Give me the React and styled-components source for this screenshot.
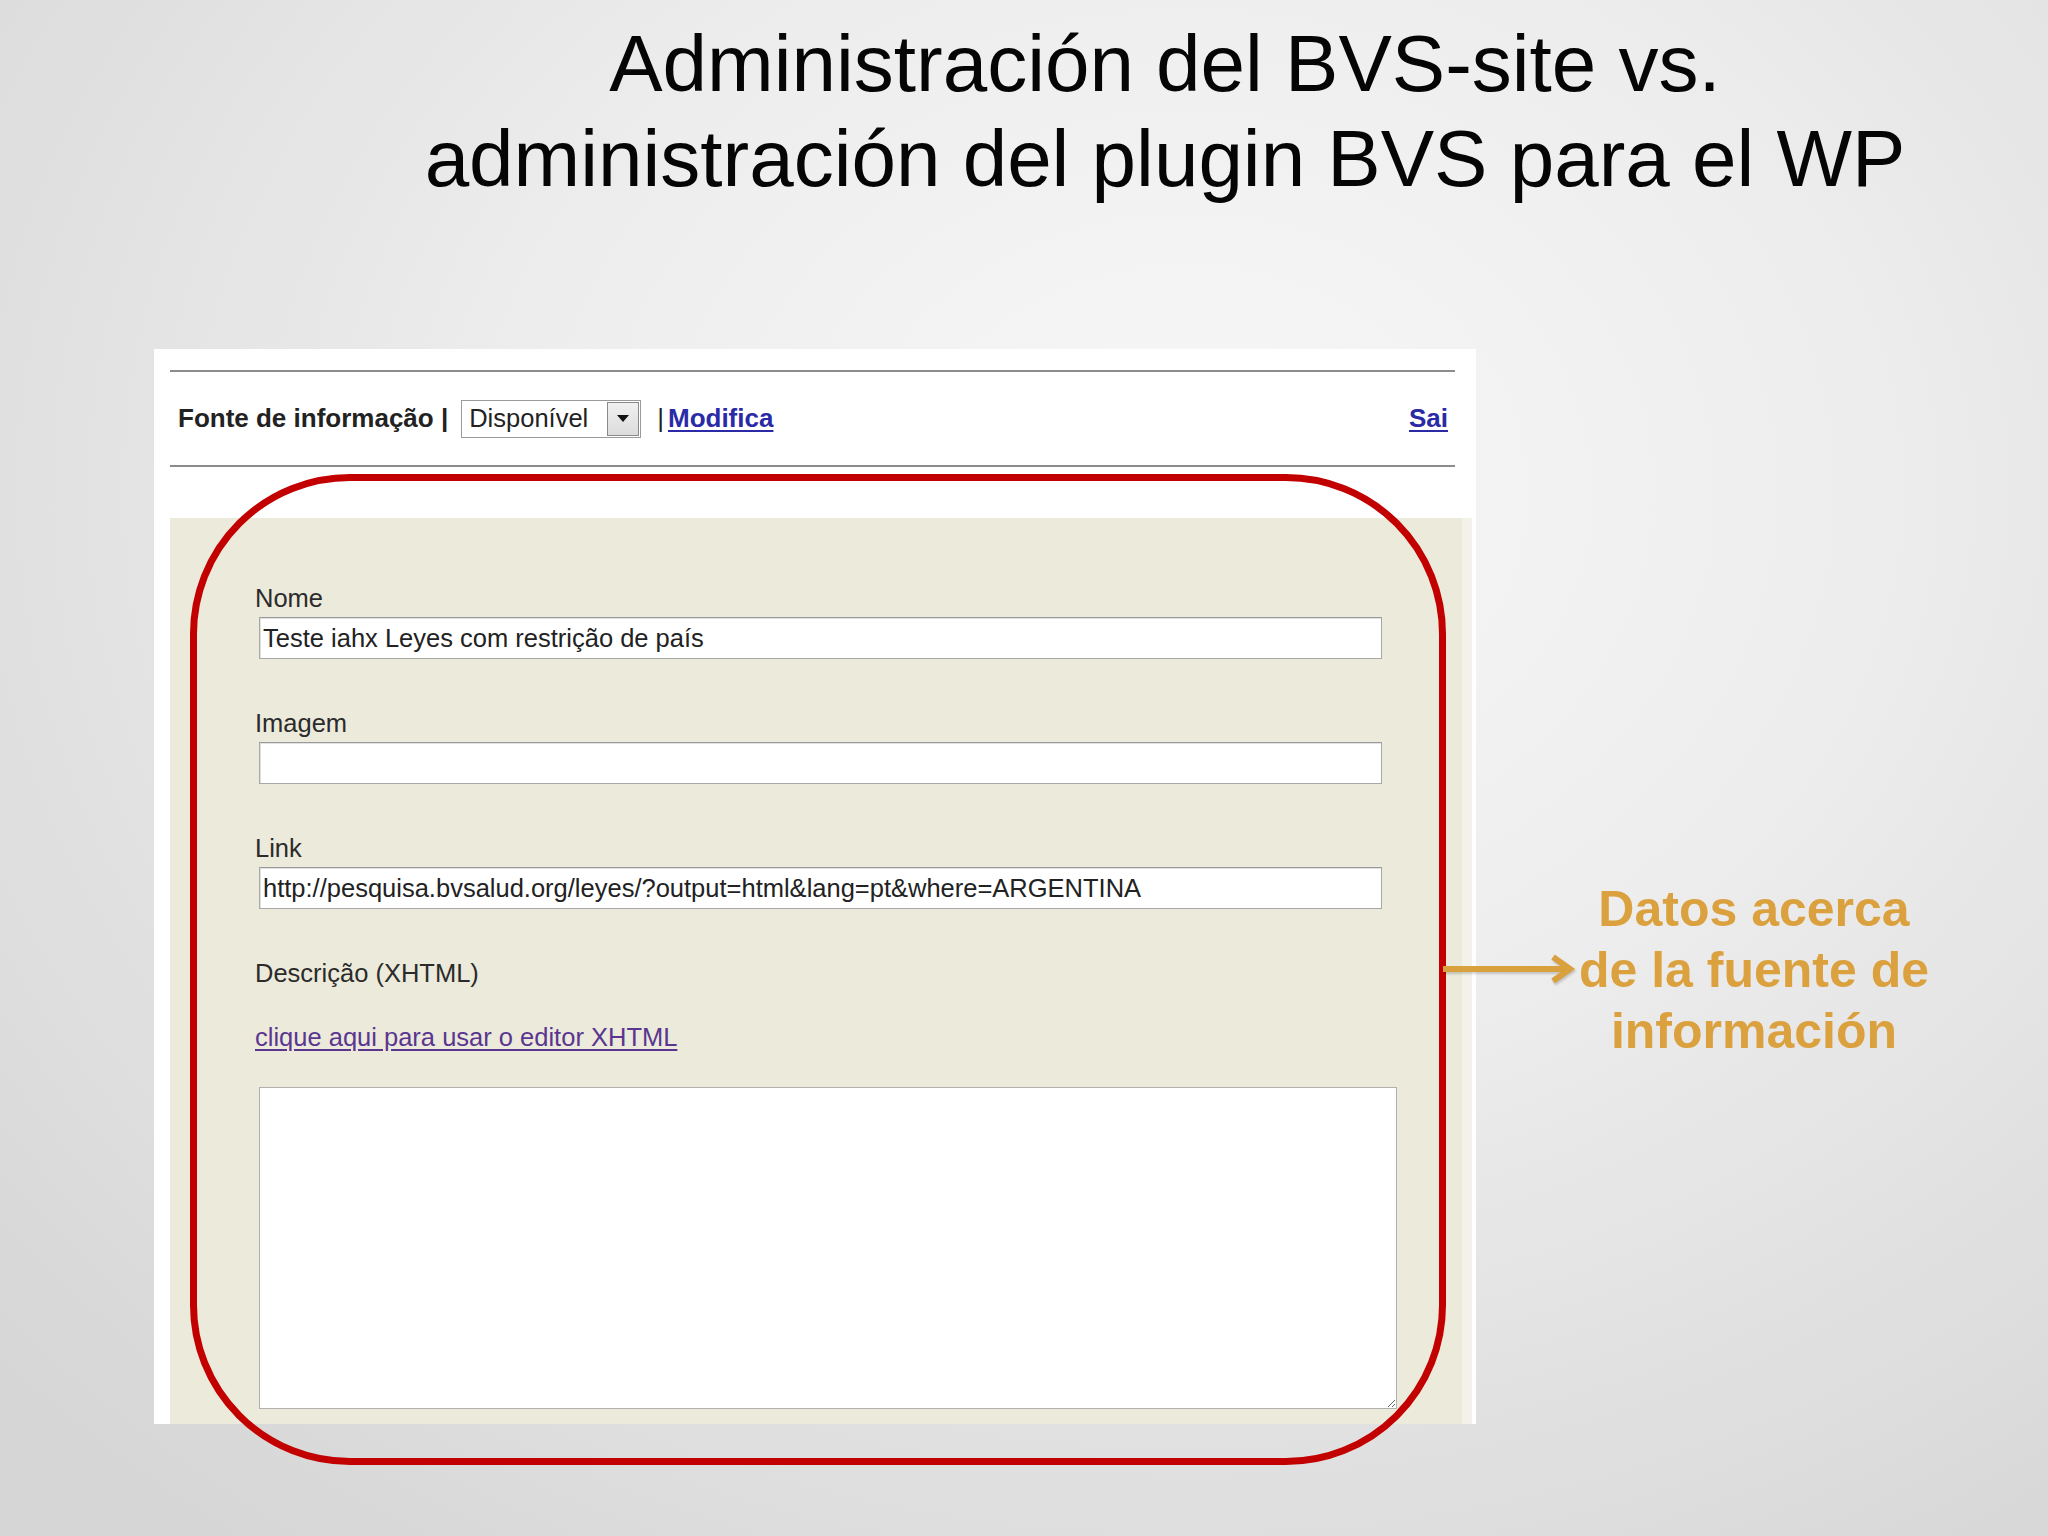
import React from "react";
import styled, { createGlobalStyle } from "styled-components";

const Global = createGlobalStyle`
  html, body { margin: 0; padding: 0; }
  body { font-family: "Liberation Sans", Arial, sans-serif; }
`;

const Slide = styled.div`
  width: 2048px;
  height: 1536px;
  overflow: hidden;
  display: flex;
  flex-direction: column;
  background: radial-gradient(ellipse 78% 85% at 58% 32%, #f7f7f7 0%, #eeeeee 40%, #d6d6d6 100%);
`;

const Title = styled.h1`
  margin: 0;
  padding: 16px 0 0 282px;
  font-family: "Liberation Sans", Arial, sans-serif;
  font-weight: 400;
  font-size: 80px;
  line-height: 95px;
  color: #050505;
  text-align: center;
`;

const Body = styled.div`
  display: flex;
  align-items: flex-start;
  margin-top: 143px;
  padding-left: 154px;
`;

const PanelWrap = styled.div`
  position: relative;
  width: 1322px;
  flex: 0 0 1322px;
`;

const Panel = styled.div`
  background: #ffffff;
  padding: 21px 4px 0 16px;
  display: flex;
  flex-direction: column;
`;

const Rule = styled.div`
  height: 2px;
  margin-right: 17px;
  background: #8c8c8c;
`;

const Toolbar = styled.div`
  height: 93px;
  display: flex;
  align-items: center;
  padding: 0 24px 0 8px;
  font-size: 26px;
  font-weight: 700;
  color: #222;
`;

const Plain = styled.span`
  white-space: pre;
  font-weight: ${(p) => (p.$light ? 400 : 700)};
`;

const Select = styled.div`
  margin: 0 16px 0 13px;
  width: 180px;
  height: 38px;
  box-sizing: border-box;
  border: 1px solid #9a9a9a;
  background: #fff;
  display: flex;
  align-items: center;
  justify-content: space-between;
  padding: 1px 1px 1px 7px;
  font-weight: 400;
  font-size: 25.5px;
  color: #222;
`;

const SelectButton = styled.div`
  width: 32px;
  height: 34px;
  box-sizing: border-box;
  border: 1px solid #8a8a8a;
  background: linear-gradient(#f0f0f0, #dcdcdc);
  display: flex;
  align-items: center;
  justify-content: center;
`;

const Caret = styled.div`
  width: 0;
  height: 0;
  border-left: 6px solid transparent;
  border-right: 6px solid transparent;
  border-top: 7px solid #111;
`;

const NavLink = styled.a`
  color: #2a2aa6;
  font-weight: 700;
  text-decoration: underline;
  text-underline-offset: 3px;
  margin-left: ${(p) => (p.$push ? "auto" : "4px")};
`;

const FormArea = styled.div`
  margin-top: 51px;
  height: 906px;
  box-sizing: border-box;
  background: #eceadb;
  border-right: 10px solid #f3f2ea;
  padding: 65px 0 0 85px;
  display: flex;
  flex-direction: column;
  font-size: 25.5px;
  color: #2b2b2b;
`;

const Field = styled.div`
  display: flex;
  flex-direction: column;
  gap: 4px;
  margin-bottom: ${(p) => p.$after || 49}px;
`;

const Label = styled.div`
  line-height: 30px;
  height: 30px;
`;

const TextInput = styled.input`
  margin-left: 4px;
  width: 1123px;
  height: 42px;
  box-sizing: border-box;
  border: 1px solid #a8a8a8;
  border-top-color: #9a9a9a;
  box-shadow: inset 1px 1px 0 #e2e2e2;
  background: #fff;
  padding: 0 3px;
  font-family: "Liberation Sans", Arial, sans-serif;
  font-size: 25.5px;
  color: #222;
  outline: none;
`;

const EditorLink = styled.a`
  line-height: 30px;
  color: #5a3690;
  text-decoration: underline;
  text-underline-offset: 3px;
  margin-bottom: 35px;
  align-self: flex-start;
`;

const Area = styled.textarea`
  margin-left: 4px;
  width: 1138px;
  height: 322px;
  box-sizing: border-box;
  border: 1px solid #b0b0b0;
  background: #fff;
  resize: both;
  font-family: "Liberation Sans", Arial, sans-serif;
  font-size: 25.5px;
  outline: none;
`;

const Highlight = styled.div`
  position: absolute;
  left: 36px;
  top: 125px;
  width: 1256px;
  height: 991px;
  box-sizing: border-box;
  border: 7px solid #c20000;
  border-radius: 160px;
  pointer-events: none;
`;

const ArrowSvg = styled.svg`
  position: absolute;
  left: 1289px;
  top: 605px;
  overflow: visible;
  filter: drop-shadow(1px 2px 1px rgba(0, 0, 0, 0.18));
`;

const Annotation = styled.div`
  flex: 0 0 556px;
  margin-top: 530px;
  text-align: center;
  font-family: "Liberation Sans", Arial, sans-serif;
  font-weight: 700;
  font-size: 50px;
  line-height: 61px;
  color: #dba13e;
`;

export default function App() {
  return (
    <>
      <Global />
      <Slide>
        <Title>
          Administración del BVS-site vs.
          <br />
          administración del plugin BVS para el WP
        </Title>
        <Body>
          <PanelWrap>
            <Panel>
              <Rule />
              <Toolbar>
                <Plain>Fonte de informação |</Plain>
                <Select>
                  <span>Disponível</span>
                  <SelectButton>
                    <Caret />
                  </SelectButton>
                </Select>
                <Plain $light>|</Plain>
                <NavLink href="#">Modifica</NavLink>
                <NavLink href="#" $push>
                  Sai
                </NavLink>
              </Toolbar>
              <Rule />
              <FormArea>
                <Field>
                  <Label>Nome</Label>
                  <TextInput readOnly defaultValue="Teste iahx Leyes com restrição de país" />
                </Field>
                <Field>
                  <Label>Imagem</Label>
                  <TextInput readOnly defaultValue="" />
                </Field>
                <Field>
                  <Label>Link</Label>
                  <TextInput
                    readOnly
                    defaultValue="http://pesquisa.bvsalud.org/leyes/?output=html&lang=pt&where=ARGENTINA"
                  />
                </Field>
                <Field $after={34}>
                  <Label>Descrição (XHTML)</Label>
                </Field>
                <EditorLink href="#">clique aqui para usar o editor XHTML</EditorLink>
                <Area readOnly defaultValue="" />
              </FormArea>
            </Panel>
            <Highlight />
            <ArrowSvg width="132" height="30" viewBox="0 0 132 30">
              <line x1="0" y1="15" x2="126" y2="15" stroke="#d9a03e" strokeWidth="6" />
              <polyline
                points="110,3 127,15 110,27"
                fill="none"
                stroke="#d9a03e"
                strokeWidth="6"
                strokeLinejoin="miter"
              />
            </ArrowSvg>
          </PanelWrap>
          <Annotation>
            Datos acerca
            <br />
            de la fuente de
            <br />
            información
          </Annotation>
        </Body>
      </Slide>
    </>
  );
}
